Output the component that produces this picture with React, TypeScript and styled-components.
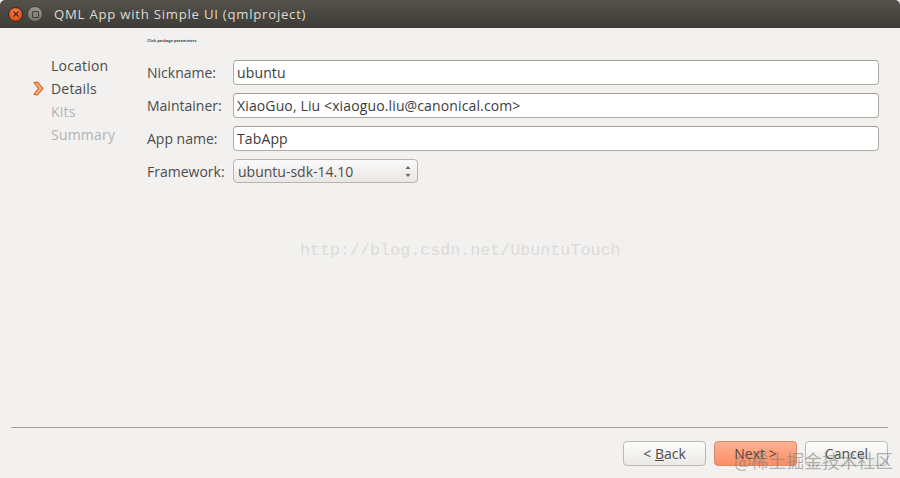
import styled, { createGlobalStyle } from 'styled-components'

const UI_FONT = `"Open Sans", "Noto Sans", sans-serif`

const GlobalStyle = createGlobalStyle`
  html, body {
    margin: 0;
    padding: 0;
    background: #f2f1f0;
  }
  * {
    box-sizing: border-box;
  }
`

const steps = [
  { label: 'Location', done: true },
  { label: 'Details', done: true, current: true },
  { label: 'Kits', done: false },
  { label: 'Summary', done: false },
]

const fields = [
  { label: 'Nickname:', value: 'ubuntu' },
  { label: 'Maintainer:', value: 'XiaoGuo, Liu <xiaoguo.liu@canonical.com>' },
  { label: 'App name:', value: 'TabApp' },
]

const App = () => {
  return (
    <Window>
      <GlobalStyle />
      <TitleBar>
        <CloseButton>
          <svg width="8" height="8" viewBox="0 0 8 8">
            <path d="M1.5 1.5 L6.5 6.5 M6.5 1.5 L1.5 6.5" stroke="#4a2413" strokeWidth="1.3" />
          </svg>
        </CloseButton>
        <MaxButton>
          <span />
        </MaxButton>
        <Title>QML App with Simple UI (qmlproject)</Title>
      </TitleBar>

      <Body>
        <Sidebar>
          {steps.map(step => (
            <Step key={step.label} $done={step.done}>
              {step.current && (
                <Marker width="11" height="15" viewBox="0 0 11 15">
                  <path d="M1 1.5 L4.5 1 L10 7.5 L4.5 14 L1 13.5 L5.5 7.5 Z" fill="#f0b070" stroke="#d8582a" strokeWidth="1.1" strokeLinejoin="round" />
                </Marker>
              )}
              {step.label}
            </Step>
          ))}
        </Sidebar>

        <Form>
          <Hint>Click package parameters</Hint>
          {fields.map(field => (
            <Row key={field.label}>
              <Label>{field.label}</Label>
              <TextInput>{field.value}</TextInput>
            </Row>
          ))}
          <ComboRow>
            <Label>Framework:</Label>
            <Combo>
              ubuntu-sdk-14.10
              <svg width="6" height="13" viewBox="0 0 6 13">
                <path d="M3 1 L5.5 4 L0.5 4 Z M0.5 9 L5.5 9 L3 12 Z" fill="#6a675f" />
              </svg>
            </Combo>
          </ComboRow>
        </Form>
      </Body>

      <Footer>
        <Separator />
        <Buttons>
          <Button><span>&lt; <u>B</u>ack</span></Button>
          <Button $primary><span>Next &gt;</span></Button>
          <Button><span>Cancel</span></Button>
        </Buttons>
      </Footer>

      <BlogMark>http://blog.csdn.net/UbuntuTouch</BlogMark>
      <SiteMark>@稀土掘金技术社区</SiteMark>
    </Window>
  )
}

const Window = styled.div`
  position: relative;
  width: 900px;
  height: 478px;
  display: flex;
  flex-direction: column;
  overflow: hidden;
  background: #f2f1f0;
  color: #4c4c4c;
  font-family: ${UI_FONT};
`

const TitleBar = styled.div`
  height: 28px;
  flex: none;
  display: flex;
  align-items: center;
  padding-left: 8px;
  background: linear-gradient(#54524b, #3e3c37);
  border-radius: 5px 5px 0 0;
`

const CloseButton = styled.div`
  width: 15px;
  height: 15px;
  border-radius: 50%;
  display: flex;
  align-items: center;
  justify-content: center;
  background: radial-gradient(circle at 50% 35%, #f58a5c, #dd4814 75%);
  border: 1px solid #3a2a22;
`

const MaxButton = styled.div`
  width: 16px;
  height: 16px;
  margin-left: 4px;
  border-radius: 50%;
  display: flex;
  align-items: center;
  justify-content: center;
  background: linear-gradient(#97958d, #74726a);
  border: 1px solid #45433e;

  span {
    width: 7px;
    height: 7px;
    border: 1px solid #3f3d38;
    border-radius: 1px;
  }
`

const Title = styled.div`
  margin-left: 11px;
  font-size: 13.2px;
  font-weight: 500;
  letter-spacing: 0.74px;
  color: #dfdbd2;
  white-space: nowrap;
`

const Body = styled.div`
  flex: 1;
  display: flex;
`

const Sidebar = styled.div`
  width: 147px;
  flex: none;
  padding: 26px 0 0 51px;
`

const Step = styled.div<{ $done: boolean }>`
  position: relative;
  height: 23px;
  line-height: 23px;
  font-size: 14px;
  letter-spacing: 0.2px;
  color: ${p => (p.$done ? '#4c4c4c' : '#b4b3b1')};
`

const Marker = styled.svg`
  position: absolute;
  left: -18px;
  top: 4px;
`

const Form = styled.div`
  flex: 1;
  padding-right: 21px;
`

const Hint = styled.div`
  height: 32px;
  padding-top: 10px;
  font-size: 3.85px;
  line-height: 6px;
  font-weight: 700;
  color: #4c4c4c;
`

const Row = styled.div`
  display: flex;
  align-items: center;
  height: 25px;
  margin-bottom: 8px;
`

const ComboRow = styled(Row)`
  height: 24px;
  margin-top: 1px;
`

const Label = styled.div`
  width: 86px;
  flex: none;
  font-size: 14px;
  color: #4c4c4c;
`

const TextInput = styled.div`
  flex: 1;
  height: 25px;
  line-height: 23px;
  padding-left: 3px;
  font-size: 14px;
  letter-spacing: 0.13px;
  color: #3c3c3c;
  background: #fff;
  border: 1px solid #b1aca4;
  border-top-color: #a39e96;
  border-radius: 4px;
  white-space: nowrap;
`

const Combo = styled.div`
  width: 185px;
  height: 24px;
  display: flex;
  align-items: center;
  justify-content: space-between;
  padding: 0 6px 0 4px;
  font-size: 14px;
  color: #4c4c4c;
  background: linear-gradient(#fbfafa, #e9e7e4);
  border: 1px solid #b9b5ae;
  border-radius: 4px;
`

const Footer = styled.div`
  flex: none;
  height: 51px;
  padding: 0 12px 0 11px;
`

const Separator = styled.div`
  height: 1px;
  background: #a5a29e;
`

const Buttons = styled.div`
  display: flex;
  justify-content: flex-end;
  gap: 8px;
  margin-top: 13px;
`

const Button = styled.div<{ $primary?: boolean }>`
  width: 83px;
  height: 25px;
  display: flex;
  align-items: center;
  justify-content: center;
  font-size: 14px;
  white-space: pre;
  color: ${p => (p.$primary ? '#5c4438' : '#4c4c4c')};
  background: ${p => (p.$primary ? 'linear-gradient(#fdb295, #f98e66)' : 'linear-gradient(#fdfdfc, #ebe9e6)')};
  border: 1px solid ${p => (p.$primary ? '#d98a69' : '#bdb9b2')};
  border-radius: 4px;
`

const BlogMark = styled.div`
  position: absolute;
  left: 300px;
  top: 240px;
  font-family: "Liberation Mono", monospace;
  font-size: 16.7px;
  line-height: 22px;
  color: #dddbd6;
  white-space: nowrap;
`

const SiteMark = styled.div`
  position: absolute;
  left: 734px;
  top: 448px;
  font-family: "Noto Sans CJK SC", sans-serif;
  font-size: 17.8px;
  line-height: 24px;
  color: rgba(120, 120, 120, 0.55);
  white-space: nowrap;
`

export default App
